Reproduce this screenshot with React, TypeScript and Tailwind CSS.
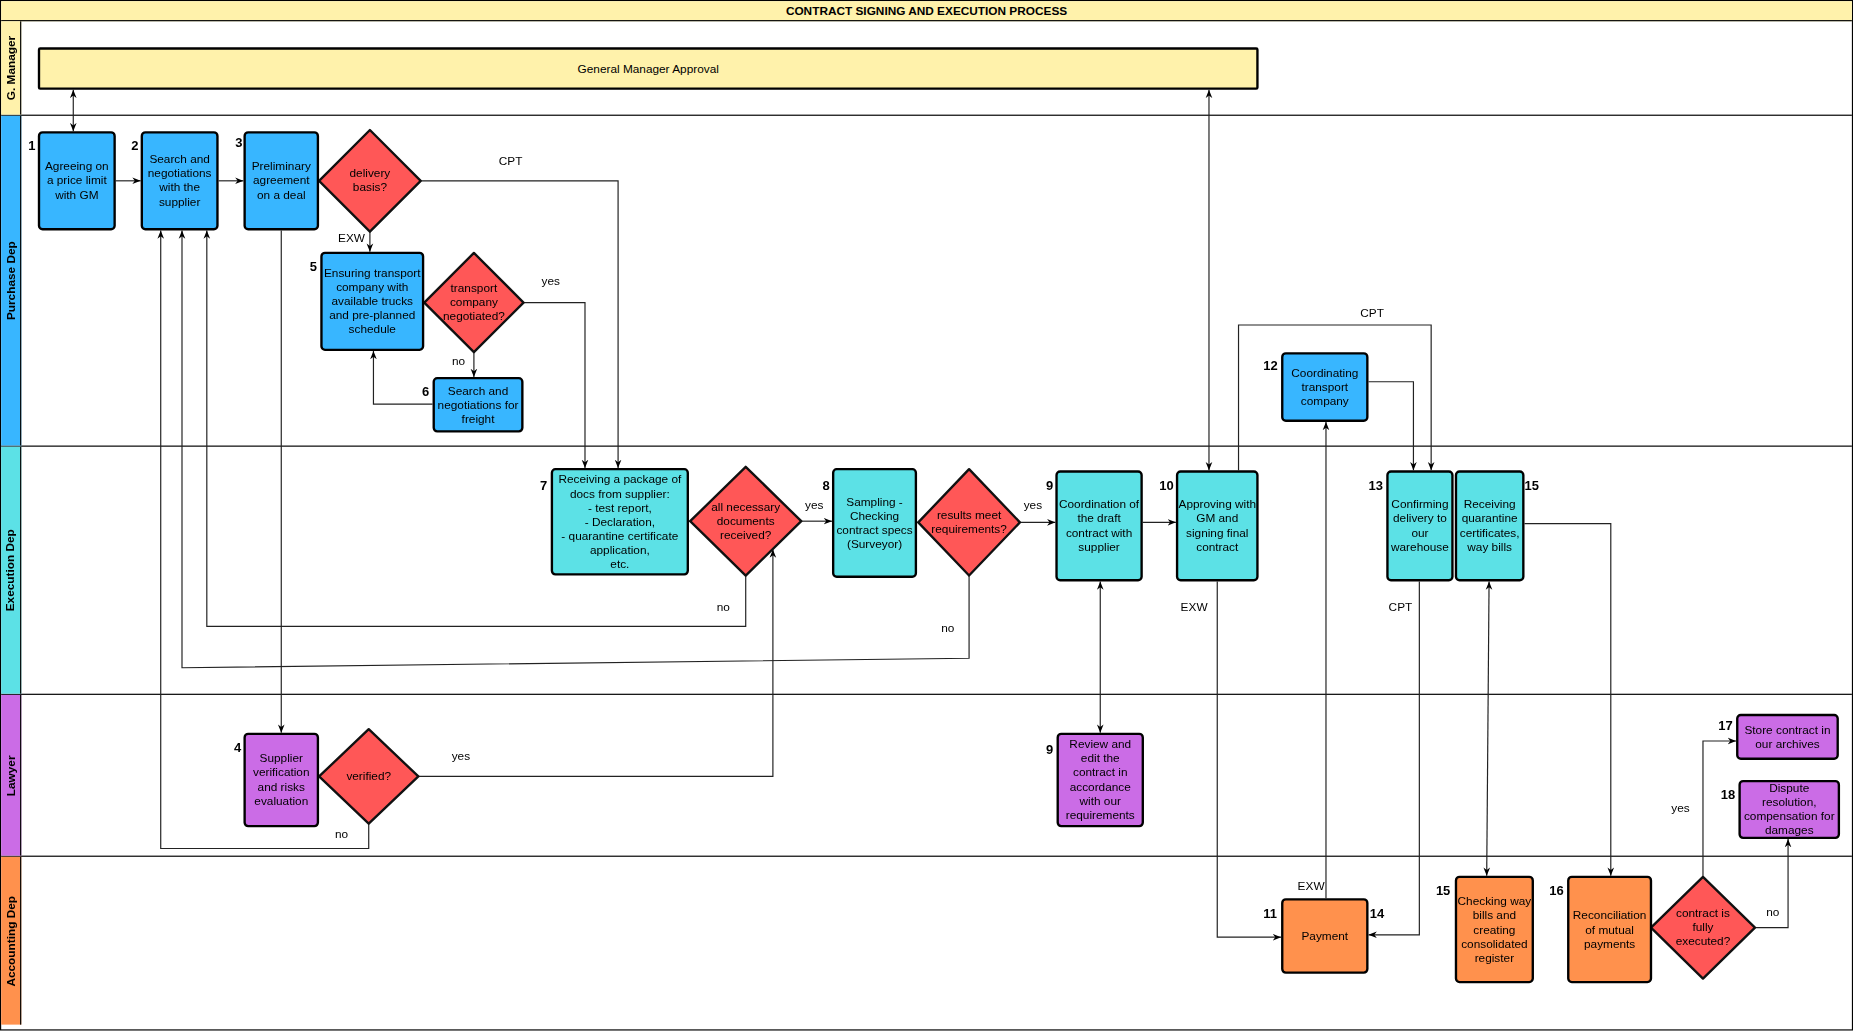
import React from 'react'

type Box = { x: number; y: number; w: number; h: number; text: string; color: string; n?: string; nx?: number; ny?: number }
type Dia = { cx: number; cy: number; rx: number; ry: number; text: string }

const BLUE = 'bg-[#38b6ff]'
const CYAN = 'bg-[#5ce1e6]'
const PURPLE = 'bg-[#cb6ce6]'
const ORANGE = 'bg-[#ff914d]'

const boxes: Box[] = [
  { x: 32, y: 111, w: 66, h: 84, text: 'Agreeing on a price limit with GM', color: BLUE, n: '1', nx: 24, ny: 115 },
  { x: 119, y: 111, w: 66, h: 84, text: 'Search and negotiations with the supplier', color: BLUE, n: '2', nx: 111, ny: 115 },
  { x: 206, y: 111, w: 64, h: 84, text: 'Preliminary agreement on a deal', color: BLUE, n: '3', nx: 199, ny: 112 },
  { x: 271, y: 213, w: 88, h: 84, text: 'Ensuring transport company with available trucks and pre-planned schedule', color: BLUE, n: '5', nx: 262, ny: 217 },
  { x: 366, y: 319, w: 77, h: 47, text: 'Search and negotiations for freight', color: BLUE, n: '6', nx: 357, ny: 323 },
  { x: 466, y: 396, w: 117, h: 91, text: 'Receiving a package of docs from supplier:\n- test report,\n- Declaration,\n- quarantine certificate application,\netc.', color: CYAN, n: '7', nx: 457, ny: 403 },
  { x: 704, y: 396, w: 72, h: 93, text: 'Sampling - Checking contract specs (Surveyor)', color: CYAN, n: '8', nx: 696, ny: 403 },
  { x: 893, y: 398, w: 74, h: 94, text: 'Coordination of the draft contract with supplier', color: CYAN, n: '9', nx: 885, ny: 403 },
  { x: 995, y: 398, w: 70, h: 94, text: 'Approving with GM and signing final contract', color: CYAN, n: '10', nx: 981, ny: 403 },
  { x: 1084, y: 298, w: 74, h: 59, text: 'Coordinating transport company', color: BLUE, n: '12', nx: 1069, ny: 301 },
  { x: 1173, y: 398, w: 57, h: 94, text: 'Confirming delivery to our warehouse', color: CYAN, n: '13', nx: 1158, ny: 403 },
  { x: 1231, y: 398, w: 59, h: 94, text: 'Receiving quarantine certificates, way bills', color: CYAN, n: '15', nx: 1290, ny: 403 },
  { x: 206, y: 620, w: 64, h: 80, text: 'Supplier verification and risks evaluation', color: PURPLE, n: '4', nx: 198, ny: 624 },
  { x: 894, y: 620, w: 74, h: 80, text: 'Review and edit the contract in accordance with our requirements', color: PURPLE, n: '9', nx: 885, ny: 626 },
  { x: 1469, y: 604, w: 87, h: 39, text: 'Store contract in our archives', color: PURPLE, n: '17', nx: 1454, ny: 606 },
  { x: 1471, y: 660, w: 86, h: 50, text: 'Dispute resolution, compensation for damages', color: PURPLE, n: '18', nx: 1456, ny: 664 },
  { x: 1084, y: 760, w: 74, h: 64, text: 'Payment', color: ORANGE, n: '11', nx: 1069, ny: 765 },
  { x: 1231, y: 741, w: 67, h: 91, text: 'Checking way bills and creating consolidated register', color: ORANGE, n: '15', nx: 1215, ny: 745 },
  { x: 1326, y: 741, w: 72, h: 91, text: 'Reconciliation of mutual payments', color: ORANGE, n: '16', nx: 1311, ny: 745 },
]

const diamonds: Dia[] = [
  { cx: 313, cy: 153, rx: 43, ry: 43, text: 'delivery basis?' },
  { cx: 401, cy: 256, rx: 42, ry: 42, text: 'transport company negotiated?' },
  { cx: 631, cy: 441, rx: 47, ry: 46, text: 'all necessary documents received?' },
  { cx: 820, cy: 442, rx: 43, ry: 45, text: 'results meet requirements?' },
  { cx: 312, cy: 657, rx: 42, ry: 40, text: 'verified?' },
  { cx: 1441, cy: 785, rx: 44, ry: 43, text: 'contract is fully executed?' },
]

// [points, arrowAtEnd, arrowAtStart]
const edges: [string, boolean, boolean][] = [
  ['62,76 62,111', true, true],
  ['98,153 119,153', true, false],
  ['185,153 206,153', true, false],
  ['356,153 523,153 523,396', true, false],
  ['313,196 313,213', true, false],
  ['443,256 495,256 495,396', true, false],
  ['401,298 401,319', true, false],
  ['366,342 316,342 316,297', true, false],
  ['238,195 238,620', true, false],
  ['583,441 584,441', false, false],
  ['678,441 704,441', true, false],
  ['631,487 631,530 175,530 175,195', true, false],
  ['776,442 777,442', false, false],
  ['863,442 893,442', true, false],
  ['820,487 820,557 154,565 154,195', true, false],
  ['312,697 312,718 136,718 136,195', true, false],
  ['354,657 654,657 654,465', true, false],
  ['931,492 931,620', true, true],
  ['967,442 995,442', true, false],
  ['1023,398 1023,76', true, true],
  ['1030,492 1030,793 1084,793', true, false],
  ['1048,398 1048,275 1211,275 1211,398', true, false],
  ['1158,323 1196,323 1196,398', true, false],
  ['1122,760 1122,357', true, false],
  ['1201,492 1201,791 1158,791', true, false],
  ['1260,492 1258,741', true, true],
  ['1290,443 1363,443 1363,741', true, false],
  ['1441,742 1441,627 1469,627', true, false],
  ['1485,785 1513,785 1513,710', true, false],
]

const labels: [number, number, string][] = [
  [432, 137, 'CPT'], [296, 202, 'EXW'], [466, 238, 'yes'], [388, 306, 'no'],
  [689, 428, 'yes'], [612, 514, 'no'], [874, 428, 'yes'], [802, 532, 'no'],
  [390, 640, 'yes'], [289, 706, 'no'], [1161, 265, 'CPT'], [1009, 514, 'EXW'],
  [1185, 514, 'CPT'], [1108, 750, 'EXW'], [1422, 684, 'yes'], [1500, 772, 'no'],
]

const lanes = [
  { name: 'G. Manager', h: 81, bg: 'bg-[#fff2ab]' },
  { name: 'Purchase Dep', h: 281, bg: 'bg-[#38b6ff]' },
  { name: 'Execution Dep', h: 211, bg: 'bg-[#5ce1e6]' },
  { name: 'Lawyer', h: 138, bg: 'bg-[#cb6ce6]' },
  { name: 'Accounting Dep', h: 143, bg: 'bg-[#ff914d]' },
]

export default function App() {
  return (
    <div className="w-[1853px] h-[1031px] overflow-hidden bg-white" style={{ fontFamily: '"Liberation Sans", Arial, sans-serif' }}>
      <div className="relative w-[1568px] h-[872px] origin-top-left scale-[1.1818] text-black">
        {/* Lanes */}
        <div className="flex flex-col w-full h-full border border-black">
          <div className="h-[17px] shrink-0 bg-[#fff2ab] border-b border-black flex items-center justify-center text-[10px] font-bold">
            CONTRACT SIGNING AND EXECUTION PROCESS
          </div>
          {lanes.map((l, i) => (
            <div key={l.name} className={`flex shrink-0 ${i < lanes.length - 1 ? 'border-b border-black' : ''}`} style={{ height: l.h - 1 }}>
              <div className={`w-[17px] shrink-0 border-r border-black ${l.bg} flex items-center justify-center`}>
                <span className="-rotate-90 whitespace-nowrap text-[10px] font-bold">{l.name}</span>
              </div>
              <div className="flex-1" />
            </div>
          ))}
        </div>

        {/* GM approval bar */}
        <div className="absolute left-[32px] top-[40px] w-[1033px] h-[36px] bg-[#fff2ab] border-2 border-black rounded-[2px] flex items-center justify-center text-[10px]">
          General Manager Approval
        </div>

        {/* Edges and diamonds */}
        <svg className="absolute inset-0" width={1568} height={872}>
          <defs>
            <marker id="ah" viewBox="0 0 10 10" refX="10" refY="5" markerWidth="7" markerHeight="7" orient="auto-start-reverse">
              <path d="M0,1 L10,5 L0,9 L3,5 Z" fill="#000" />
            </marker>
          </defs>
          {edges.map(([p, e, s], i) => (
            <polyline key={i} points={p} fill="none" stroke="#222" strokeWidth={1}
              markerEnd={e ? 'url(#ah)' : undefined} markerStart={s ? 'url(#ah)' : undefined} />
          ))}
          {diamonds.map((d, i) => (
            <polygon key={i}
              points={`${d.cx},${d.cy - d.ry} ${d.cx + d.rx},${d.cy} ${d.cx},${d.cy + d.ry} ${d.cx - d.rx},${d.cy}`}
              fill="#ff5757" stroke="#111" strokeWidth={2} strokeLinejoin="round" />
          ))}
        </svg>

        {diamonds.map((d, i) => (
          <div key={i} className="absolute flex items-center justify-center text-center text-[10px] leading-[12px]"
            style={{ left: d.cx - d.rx * 0.75, top: d.cy - d.ry * 0.7, width: d.rx * 1.5, height: d.ry * 1.4 }}>
            {d.text}
          </div>
        ))}

        {boxes.map((b, i) => (
          <React.Fragment key={i}>
            <div className={`absolute ${b.color} border-2 border-black rounded-[4px] flex items-center justify-center text-center text-[10px] leading-[12px] whitespace-pre-line overflow-hidden`}
              style={{ left: b.x, top: b.y, width: b.w, height: b.h }}>
              {b.text}
            </div>
            {b.n && (
              <div className="absolute text-[11px] font-bold" style={{ left: b.nx, top: b.ny }}>{b.n}</div>
            )}
          </React.Fragment>
        ))}

        {labels.map(([x, y, t], i) => (
          <div key={i} className="absolute text-[10px] leading-[12px]" style={{ left: x - 10, top: y - 6, width: 20, textAlign: 'center' }}>{t}</div>
        ))}
        <div className="absolute text-[11px] font-bold" style={{ left: 1159, top: 765 }}>14</div>
      </div>
    </div>
  )
}
